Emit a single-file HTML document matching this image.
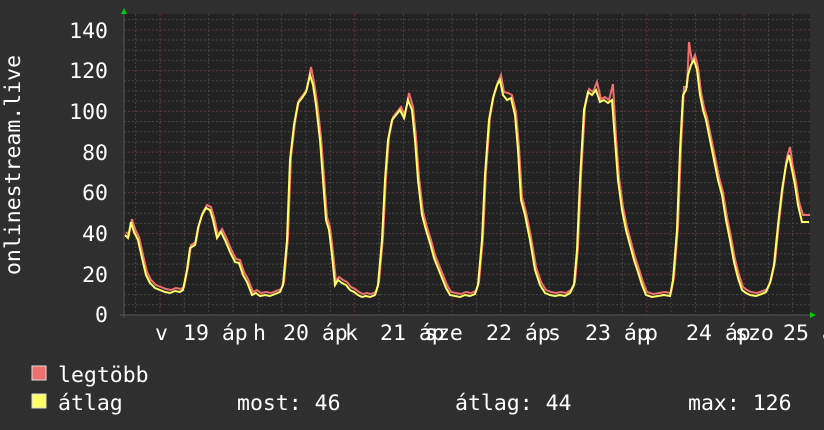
<!DOCTYPE html>
<html><head><meta charset="utf-8"><style>
html,body{margin:0;padding:0;background:#2f2f2f;width:824px;height:430px;overflow:hidden}
svg{display:block}
text{font-family:"DejaVu Sans Mono","Liberation Mono",monospace;fill:#fff}
</style></head><body>
<svg width="824" height="430" viewBox="0 0 824 430">
<rect x="124" y="14" width="686" height="301" fill="#222"/>
<g stroke="#464646" stroke-dasharray="2,2">
<line x1="124" x2="810" y1="304.8" y2="304.8"/><line x1="124" x2="810" y1="294.6" y2="294.6"/><line x1="124" x2="810" y1="284.4" y2="284.4"/>
<line x1="124" x2="810" y1="264.1" y2="264.1"/><line x1="124" x2="810" y1="253.9" y2="253.9"/><line x1="124" x2="810" y1="243.7" y2="243.7"/>
<line x1="124" x2="810" y1="223.4" y2="223.4"/><line x1="124" x2="810" y1="213.2" y2="213.2"/><line x1="124" x2="810" y1="203" y2="203"/>
<line x1="124" x2="810" y1="182.6" y2="182.6"/><line x1="124" x2="810" y1="172.4" y2="172.4"/><line x1="124" x2="810" y1="162.2" y2="162.2"/>
<line x1="124" x2="810" y1="141.9" y2="141.9"/><line x1="124" x2="810" y1="131.7" y2="131.7"/><line x1="124" x2="810" y1="121.5" y2="121.5"/>
<line x1="124" x2="810" y1="101.1" y2="101.1"/><line x1="124" x2="810" y1="90.9" y2="90.9"/><line x1="124" x2="810" y1="80.7" y2="80.7"/>
<line x1="124" x2="810" y1="60.4" y2="60.4"/><line x1="124" x2="810" y1="50.2" y2="50.2"/><line x1="124" x2="810" y1="40" y2="40"/>
<line x1="124" x2="810" y1="19.6" y2="19.6"/>
<line y1="14" y2="315" x1="135.6" x2="135.6"/><line y1="14" y2="315" x1="184.3" x2="184.3"/><line y1="14" y2="315" x1="208.7" x2="208.7"/><line y1="14" y2="315" x1="233" x2="233"/>
<line y1="14" y2="315" x1="281.7" x2="281.7"/><line y1="14" y2="315" x1="306" x2="306"/><line y1="14" y2="315" x1="330.4" x2="330.4"/>
<line y1="14" y2="315" x1="379" x2="379"/><line y1="14" y2="315" x1="403.4" x2="403.4"/><line y1="14" y2="315" x1="427.7" x2="427.7"/>
<line y1="14" y2="315" x1="476.4" x2="476.4"/><line y1="14" y2="315" x1="500.7" x2="500.7"/><line y1="14" y2="315" x1="525" x2="525"/>
<line y1="14" y2="315" x1="573.7" x2="573.7"/><line y1="14" y2="315" x1="598" x2="598"/><line y1="14" y2="315" x1="622.4" x2="622.4"/>
<line y1="14" y2="315" x1="671" x2="671"/><line y1="14" y2="315" x1="695.4" x2="695.4"/><line y1="14" y2="315" x1="719.7" x2="719.7"/>
<line y1="14" y2="315" x1="768.4" x2="768.4"/><line y1="14" y2="315" x1="792.7" x2="792.7"/>
</g>
<g stroke="#6a3434" stroke-dasharray="2,2">
<line x1="124" x2="810" y1="274.3" y2="274.3"/><line x1="124" x2="810" y1="233.6" y2="233.6"/><line x1="124" x2="810" y1="192.8" y2="192.8"/>
<line x1="124" x2="810" y1="152.1" y2="152.1"/><line x1="124" x2="810" y1="111.3" y2="111.3"/><line x1="124" x2="810" y1="70.6" y2="70.6"/><line x1="124" x2="810" y1="29.9" y2="29.9"/>
<line y1="14" y2="318" x1="160" x2="160"/><line y1="14" y2="318" x1="257.4" x2="257.4"/><line y1="14" y2="318" x1="354.7" x2="354.7"/><line y1="14" y2="318" x1="452" x2="452"/>
<line y1="14" y2="318" x1="549.4" x2="549.4"/><line y1="14" y2="318" x1="646.7" x2="646.7"/><line y1="14" y2="318" x1="744" x2="744"/>
</g>
<line x1="124" y1="10" x2="124" y2="318" stroke="#555"/>
<line x1="120" y1="315" x2="812" y2="315" stroke="#555"/>
<polygon points="121,14 127,14 124,8" fill="#0c0"/>
<polygon points="810,312 810,318 816,315" fill="#0c0"/>
<polyline fill="none" stroke="#f07070" stroke-width="2" transform="translate(1,-3)" points="125,235 128,238 131,222 134,232 138,240 142,258 146,275 150,283 155,288 160,290 165,292 170,293 175,291 180,292 183,290 187,270 190,248 195,245 198,228 202,215 206,208 210,210 213,220 217,238 221,232 225,240 230,252 235,262 239,263 243,275 247,282 252,295 256,293 260,296 265,295 270,296 275,294 280,292 283,285 287,240 290,160 294,125 298,103 302,98 306,92 310,70 313,85 316,105 320,140 323,180 326,220 329,230 332,255 335,285 338,280 342,283 346,285 350,290 354,292 358,295 362,297 366,296 370,297 375,295 378,285 382,240 385,180 388,140 392,120 396,115 400,110 404,118 408,96 412,110 415,140 418,180 422,215 426,230 430,243 434,258 438,268 442,278 446,288 450,295 455,296 460,297 465,295 470,296 475,294 478,285 482,240 485,175 489,120 493,98 497,85 500,78 503,95 507,96 511,98 515,115 518,150 521,200 525,215 530,240 535,270 540,285 545,293 550,295 555,296 560,295 565,296 570,293 574,285 577,250 580,180 584,110 588,92 592,95 596,85 600,102 604,100 608,103 612,87 615,140 618,180 622,210 626,230 630,245 634,260 638,272 642,285 646,295 652,297 658,296 664,295 670,296 673,280 677,230 680,150 683,90 686,90 688,45 691,65 694,58 697,70 700,95 703,110 706,120 710,140 714,160 718,180 722,195 726,220 730,240 734,262 738,278 742,290 746,293 750,295 756,296 762,294 766,292 770,283 774,265 778,225 782,190 786,160 789,150 792,170 795,185 798,205 802,218 806,218 809,218"/>
<polyline fill="none" stroke="#ffff66" stroke-width="2" points="125,235 128,238 131,222 134,232 138,240 142,258 146,275 150,283 155,288 160,290 165,292 170,293 175,291 180,292 183,290 187,270 190,248 195,245 198,228 202,215 206,208 210,210 213,220 217,238 221,232 225,240 230,252 235,262 239,263 243,275 247,282 252,295 256,293 260,296 265,295 270,296 275,294 280,292 283,285 287,240 290,160 294,125 298,103 302,98 306,92 310,75 313,85 316,105 320,140 323,180 326,220 329,230 332,255 335,285 338,280 342,283 346,285 350,290 354,292 358,295 362,297 366,296 370,297 375,295 378,285 382,240 385,180 388,140 392,120 396,115 400,110 404,118 408,100 412,110 415,140 418,180 422,215 426,230 430,243 434,258 438,268 442,278 446,288 450,295 455,296 460,297 465,295 470,296 475,294 478,285 482,240 485,175 489,120 493,98 497,85 500,80 503,95 507,100 511,98 515,115 518,150 521,200 525,215 530,240 535,270 540,285 545,293 550,295 555,296 560,295 565,296 570,293 574,285 577,250 580,180 584,110 588,92 592,95 596,90 600,102 604,100 608,103 612,100 615,140 618,180 622,210 626,230 630,245 634,260 638,272 642,285 646,295 652,297 658,296 664,295 670,296 673,280 677,230 680,150 683,95 686,90 688,75 691,65 694,60 697,70 700,95 703,110 706,120 710,140 714,160 718,180 722,195 726,220 730,240 734,262 738,278 742,290 746,293 750,295 756,296 762,294 766,292 770,283 774,265 778,225 782,190 786,165 789,155 792,170 795,185 798,205 802,222 806,222 809,222"/>
<g font-size="21.5" text-anchor="end">
<text x="108" y="38">140</text><text x="108" y="78">120</text><text x="108" y="119">100</text>
<text x="108" y="160">80</text><text x="108" y="200">60</text><text x="108" y="241">40</text>
<text x="108" y="282">20</text><text x="108" y="322">0</text>
</g>
<text font-size="21.5" transform="translate(20,165) rotate(-90)" text-anchor="middle">onlinestream.live</text>
<g font-size="21.5">
<text x="155" y="340">v</text><text x="183" y="340">19 áp</text>
<text x="253" y="340">h</text><text x="283" y="340">20 áp</text>
<text x="345" y="340">k</text><text x="380" y="340">21 áp</text>
<text x="424" y="340">sze</text><text x="486" y="340">22 áp</text>
<text x="548" y="340">s</text><text x="585" y="340">23 áp</text>
<text x="645" y="340">p</text><text x="686" y="340">24 áp</text>
<text x="735" y="340">szo</text><text x="783" y="340">25 á</text>
</g>
<rect x="32" y="366" width="14" height="14" fill="#f07070" stroke="#ddd" stroke-width="1"/>
<rect x="32" y="394" width="14" height="14" fill="#ffff66" stroke="#ddd" stroke-width="1"/>
<g font-size="21.5">
<text x="58" y="382">legtöbb</text>
<text x="58" y="410">átlag</text>
<text x="237" y="410">most: 46</text>
<text x="455" y="410">átlag: 44</text>
<text x="688" y="410">max: 126</text>
</g>
</svg>
</body></html>
